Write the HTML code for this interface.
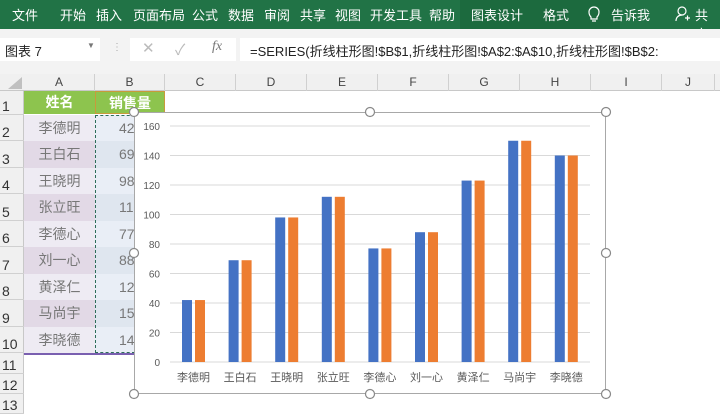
<!DOCTYPE html>
<html><head><meta charset="utf-8"><style>
*{margin:0;padding:0;box-sizing:border-box}
body{width:720px;height:414px;overflow:hidden;background:#fff;font-family:"Liberation Sans","Noto Sans CJK SC",sans-serif;position:relative}
.abs{position:absolute}
.rib{left:0;top:0;width:720px;height:29px;background:#217346;color:#fff;font-size:13px}
.rib span{position:absolute;top:5px}
</style></head><body>
<div class="abs rib">
<span style="left:12px">文件</span><span style="left:60px">开始</span><span style="left:96px">插入</span><span style="left:133px">页面布局</span><span style="left:192px">公式</span><span style="left:228px">数据</span><span style="left:264px">审阅</span><span style="left:300px">共享</span><span style="left:335px">视图</span><span style="left:370px">开发工具</span><span style="left:429px">帮助</span>
<div class="abs" style="left:460px;top:0;width:160px;height:29px;background:#1c6a3e"></div>
<span style="left:471px">图表设计</span><span style="left:543px">格式</span>
<svg class="abs" style="left:588px;top:6px" width="12" height="17" viewBox="0 0 12 17"><path d="M3 11 C1 9 1 7 1 6 A5 5 0 0 1 11 6 C11 7 11 9 9 11 L9 13 L3 13 Z M4 15 H8" fill="none" stroke="#fff" stroke-width="1.2"/></svg>
<span style="left:611px">告诉我</span>
<svg class="abs" style="left:675px;top:6px" width="16" height="16" viewBox="0 0 16 16"><circle cx="7" cy="5" r="4" fill="none" stroke="#fff" stroke-width="1.2"/><path d="M1 15 C1 11 4 9 7 9 M10 12 H15 M12.5 9.5 V14.5" fill="none" stroke="#fff" stroke-width="1.2"/></svg>
<span style="left:695px">共享</span>
</div>
<div class="abs" style="left:0;top:29px;width:720px;height:45px;background:#f3f3f3"></div>
<div class="abs" style="left:0;top:38px;width:100px;height:23px;background:#fff;font-size:13px;padding:3px 5px;color:#222">图表 7<span style="position:absolute;left:87px;top:3px;font-size:8px;color:#777">▼</span></div>
<div class="abs" style="left:112px;top:42px;color:#aaa;font-size:10px">⋮</div>
<div class="abs" style="left:130px;top:38px;width:106px;height:23px;background:#fff;color:#bbb;font-size:15px"><span style="position:absolute;left:12px;top:1px">✕</span><span style="position:absolute;left:45px;top:1px">✓</span><span style="position:absolute;left:82px;top:1px;color:#777;font-family:'Liberation Serif',serif;font-style:italic;font-size:14px">fx</span></div>
<div class="abs" style="left:240px;top:38px;width:480px;height:23px;background:#fff;font-size:13px;padding:3px 10px;color:#222;white-space:nowrap">=SERIES(折线柱形图!$B$1,折线柱形图!$A$2:$A$10,折线柱形图!$B$2:</div>
<div class="abs" style="left:0;top:74px;width:720px;height:17px;background:#f0f0f0;border-bottom:1px solid #c8c8c8"></div>
<svg class="abs" style="left:0;top:74px" width="24" height="17"><path d="M22 3 L22 15 L8 15 Z" fill="#c0c0c0"/></svg>
<div id="cols"></div>
<div class="abs" style="left:0;top:91px;width:24px;height:323px;background:#f0f0f0;border-right:1px solid #c8c8c8"></div>
<div id="rows"></div>
<div class="abs" style="left:24px;top:91px;width:71px;height:23px;background:#8dc44e;color:#fff;font-weight:bold;font-size:14px;text-align:center;line-height:23px">姓名</div>
<div class="abs" style="left:95px;top:91px;width:70px;height:23px;background:#8dc44e;color:#fff;font-weight:bold;font-size:14px;text-align:center;line-height:23px;border:1px solid #c89a3c">销售量</div>
<div id="cells"></div>
<div class="abs" style="left:95px;top:115px;width:40px;height:238px;border:1.5px dashed #2e6e5a;border-right:none"></div>
<div class="abs" style="left:24px;top:353px;width:111px;height:2px;background:#7a5fb0"></div>
<div class="abs" style="left:134px;top:112px;width:472px;height:282px;background:#fff;border:1px solid #a8a8a8"></div>
<svg class="abs" style="left:0;top:0" width="720" height="414" id="ch"></svg>
<script>
var cols=['A','B','C','D','E','F','G','H','I','J'],cx=[24,95,165,236,307,378,449,520,591,662,715],h='';
for(var i=0;i<10;i++)h+='<div class="abs" style="left:'+cx[i]+'px;top:74px;width:'+(cx[i+1]-cx[i])+'px;height:17px;border-right:1px solid #d0d0d0;text-align:center;font-size:12px;color:#444;line-height:17px">'+cols[i]+'</div>';
document.getElementById('cols').innerHTML=h;
var ry=[91,115,141,168,194,221,247,274,300,327,353,374,394,414];h='';
for(i=0;i<13;i++)h+='<div class="abs" style="left:0;top:'+ry[i]+'px;width:24px;height:'+(ry[i+1]-ry[i])+'px;border-bottom:1px solid #d0d0d0;font-size:14px;color:#333;padding-left:2px;padding-top:'+(ry[i+1]-ry[i]-17)+'px">'+(i+1)+'</div>';
document.getElementById('rows').innerHTML=h;
var nm=['李德明','王白石','王晓明','张立旺','李德心','刘一心','黄泽仁','马尚宇','李晓德'],v=[42,69,98,112,77,88,123,150,140];h='';
for(i=0;i<9;i++){var bg=i%2?'#e2d9e6':'#eeebf3';h+='<div class="abs" style="left:24px;top:'+ry[i+1]+'px;width:71px;height:'+(ry[i+2]-ry[i+1])+'px;background:'+bg+';color:#777;font-size:14px;text-align:center;line-height:'+(ry[i+2]-ry[i+1])+'px">'+nm[i]+'</div><div class="abs" style="left:95px;top:'+ry[i+1]+'px;width:40px;height:'+(ry[i+2]-ry[i+1])+'px;background:'+(i%2?'#dfe6ef':'#e9eef6')+';color:#777;font-size:14px;line-height:'+(ry[i+2]-ry[i+1])+'px;overflow:hidden;white-space:nowrap"><span style="position:absolute;left:24px">'+v[i]+'</span></div>';}
document.getElementById('cells').innerHTML=h;
var s='';
for(i=0;i<=8;i++){var y=362-i*29.5;s+='<line x1="170" x2="590" y1="'+y+'" y2="'+y+'" stroke="#d9d9d9"/><text x="160" y="'+(y+4)+'" text-anchor="end" font-size="10" fill="#595959">'+(i*20)+'</text>';}
for(i=0;i<9;i++){var x=182+i*46.6,bh=v[i]*1.475;s+='<rect x="'+x+'" y="'+(362-bh)+'" width="10" height="'+bh+'" fill="#4472c4"/><rect x="'+(x+13)+'" y="'+(362-bh)+'" width="10" height="'+bh+'" fill="#ed7d31"/><text x="'+(x+11.5)+'" y="381" text-anchor="middle" font-size="11" fill="#595959">'+nm[i]+'</text>';}
[[134,112],[370,112],[606,112],[134,253],[606,253],[134,394],[370,394],[606,394]].forEach(function(p){s+='<circle cx="'+p[0]+'" cy="'+p[1]+'" r="4.5" fill="#fff" stroke="#888" stroke-width="1.2"/>';});
document.getElementById('ch').innerHTML=s;
</script>
</body></html>
